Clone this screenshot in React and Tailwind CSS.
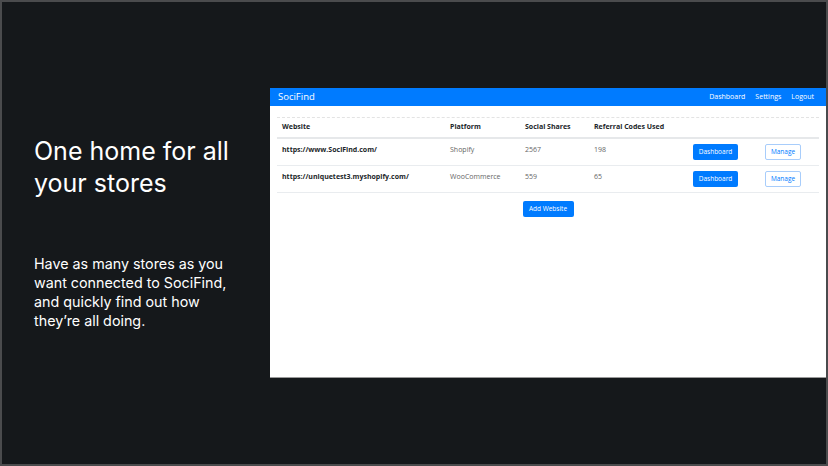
import React from "react";

const rows = [
  { site: "https://www.SociFind.com/", platform: "Shopify", shares: "2567", codes: "198" },
  { site: "https://uniquetest3.myshopify.com/", platform: "WooCommerce", shares: "559", codes: "65" },
];

const StoresPreview = () => (
  <div className="w-[556px] h-[290px] bg-white border-b border-[#9a9a9a] flex flex-col" style={{ fontFamily: '"Open Sans", sans-serif' }}>
    <div className="h-[18px] bg-[#007bff] flex items-center justify-between px-[8px] text-white">
      <span className="text-[9.5px]">SociFind</span>
      <div className="flex gap-[10px] text-[7px] pr-[4px]">
        <span>Dashboard</span>
        <span>Settings</span>
        <span>Logout</span>
      </div>
    </div>
    <div className="px-[7px] pt-[11px]">
      <div className="w-[542px] border-t border-dashed border-[#e3e3e3]" />
      <table className="w-[542px] table-fixed border-collapse text-[7px] text-[#212529]">
        <colgroup>
          <col className="w-[168px]" />
          <col className="w-[75px]" />
          <col className="w-[69px]" />
          <col className="w-[99px]" />
          <col className="w-[72px]" />
          <col className="w-[59px]" />
        </colgroup>
        <thead>
          <tr className="border-b-2 border-[#e6e8ea]">
            <th className="text-left font-bold h-[20px] pl-[5px]">Website</th>
            <th className="text-left font-bold pl-[5px]">Platform</th>
            <th className="text-left font-bold pl-[5px]">Social Shares</th>
            <th className="text-left font-bold pl-[5px]">Referral Codes Used</th>
            <th></th>
            <th></th>
          </tr>
        </thead>
        <tbody>
          {rows.map((r) => (
            <tr key={r.site} className="border-b border-[#e9ecef] h-[27px]">
              <td className="align-top pt-[6px] pl-[5px] font-bold">{r.site}</td>
              <td className="align-top pt-[6px] pl-[5px] text-[#666]">{r.platform}</td>
              <td className="align-top pt-[6px] pl-[5px] text-[#666]">{r.shares}</td>
              <td className="align-top pt-[6px] pl-[5px] text-[#666]">{r.codes}</td>
              <td className="align-middle pl-[5px]">
                <span className="inline-flex items-center justify-center w-[45px] h-[16px] rounded-[2px] bg-[#007bff] text-white text-[6.5px]">Dashboard</span>
              </td>
              <td className="align-middle pl-[5px]">
                <span className="inline-flex items-center justify-center w-[36px] h-[16px] rounded-[2px] border border-[#a8cdfb] text-[#007bff] text-[6.5px]">Manage</span>
              </td>
            </tr>
          ))}
        </tbody>
      </table>
      <div className="flex justify-center pt-[8px]">
        <span className="inline-flex items-center justify-center w-[51px] h-[16px] rounded-[2px] bg-[#007bff] text-white text-[6.5px]">Add Website</span>
      </div>
    </div>
  </div>
);

export default function App() {
  return (
    <div className="w-[828px] h-[466px] bg-[#15181b] border-2 border-[#4a4b4d] flex" style={{ fontFamily: '"Open Sans", sans-serif' }}>
      <div className="w-[268px] pl-[32px] pt-[133px] text-white" style={{ fontFamily: 'Inter, sans-serif' }}>
        <h1 className="text-[25px] leading-[32px] font-normal">
          One home for all<br />your stores
        </h1>
        <p className="mt-[55px] text-[14.3px] leading-[19px] w-[205px]">
          Have as many stores as you want connected to SociFind, and quickly find out how they’re all doing.
        </p>
      </div>
      <div className="pt-[86px]">
        <StoresPreview />
      </div>
    </div>
  );
}
